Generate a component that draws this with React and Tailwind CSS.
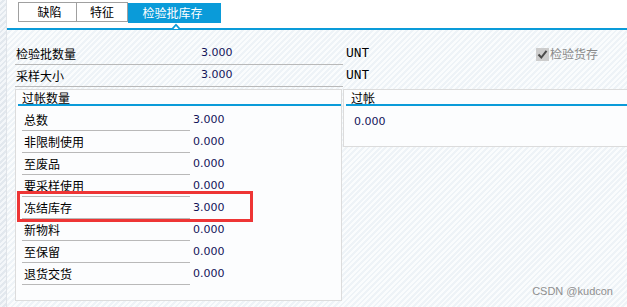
import React from "react";

const cjk = "font-['Noto_Sans_CJK_SC','Noto_Sans',sans-serif]";
const num = "font-['DejaVu_Sans',sans-serif] text-[11px] text-[#14145a]";

function Row({ label, value }) {
  return (
    <div className="flex items-center h-[22px]">
      <div className={`w-[168px] h-[22px] border-b border-[#b9b9b9] pl-[2px] flex items-center text-[12px] text-black ${cjk}`}>
        {label}
      </div>
      <div className={`ml-[3px] ${num}`}>{value}</div>
    </div>
  );
}

export default function App() {
  const rows = [
    ["总数", "3.000"],
    ["非限制使用", "0.000"],
    ["至废品", "0.000"],
    ["要采样使用", "0.000"],
    ["冻结库存", "3.000"],
    ["新物料", "0.000"],
    ["至保留", "0.000"],
    ["退货交货", "0.000"],
  ];
  return (
    <div className="w-[627px] h-[307px] relative overflow-hidden flex bg-white">
      <div className="w-[7px] h-full border-r border-[#dfe3e8] bg-[repeating-linear-gradient(135deg,#f3f6f9_0px,#f3f6f9_2px,#e2e8ee_2px,#e2e8ee_4px)]" />
      <div className="flex-1 flex flex-col">
        <div className="h-[28px] bg-white flex items-start pl-[11px] pt-[2px]">
          <div className={`w-[59px] h-[20px] border border-[#a0a0a0] flex items-center justify-center pl-[4px] text-[12px] text-black ${cjk}`}>
            缺陷
          </div>
          <div className={`w-[51px] h-[20px] border border-l-0 border-[#a0a0a0] flex items-center justify-center text-[12px] text-black ${cjk}`}>
            特征
          </div>
          <div className={`w-[93px] h-[20px] mt-[1px] bg-[#0a9bd9] flex items-center justify-center pr-[4px] text-[12px] text-white ${cjk}`}>
            检验批库存
          </div>
        </div>
        <div className="h-[2px] bg-[#0a9bd9] relative">
          <svg className="absolute left-[164px] top-[-5px]" width="10" height="6" viewBox="0 0 10 6">
            <polygon points="0,6 5,0.5 10,6" fill="#0a9bd9" />
            <polygon points="2.5,6 5,3 7.5,6" fill="#ffffff" />
          </svg>
        </div>
        <div className="flex-1 relative bg-[repeating-linear-gradient(135deg,#fafcfd_0px,#fafcfd_2px,#eef3f7_2px,#eef3f7_4px)] pt-[13px]">
          <div className="flex items-center h-[22px] ml-[8px]">
            <div className={`w-[328px] h-[22px] border-b border-[#b9b9b9] flex items-center text-[12px] text-black ${cjk}`}>
              <span className="w-[186px] pl-[1px]">检验批数量</span>
              <span className={num}>3.000</span>
            </div>
            <span className="ml-[3px] font-['Liberation_Mono',monospace] text-[13px] text-black">UNT</span>
            <div className={`ml-auto mr-[29px] flex items-center text-[12px] text-[#8a8a8a] ${cjk}`}>
              <span className="w-[13px] h-[13px] bg-[#cdcdcd] flex items-center justify-center mr-[1px]">
                <svg width="11" height="11" viewBox="0 0 11 11">
                  <path d="M1.5 5.5 L4.3 8.5 L9.5 1.8" stroke="#4a4a4a" strokeWidth="2" fill="none" />
                </svg>
              </span>
              检验货存
            </div>
          </div>
          <div className="flex items-center h-[22px] ml-[8px]">
            <div className={`w-[328px] h-[22px] border-b border-[#b9b9b9] flex items-center text-[12px] text-black ${cjk}`}>
              <span className="w-[186px] pl-[1px]">采样大小</span>
              <span className={num}>3.000</span>
            </div>
            <span className="ml-[3px] font-['Liberation_Mono',monospace] text-[13px] text-black">UNT</span>
          </div>
          <div className="flex items-start mt-[2px] ml-[8px]">
            <div className="w-[327px] h-[212px] border border-[#dcdcdc] bg-[#fcfdfe] flex flex-col">
              <div className={`ml-[2px] h-[16px] border-b-2 border-[#0a9bd9] pl-[4px] text-[12px] leading-[15px] text-black ${cjk}`}>
                过帐数量
              </div>
              <div className="mt-[3px] ml-[6px] flex flex-col">
                {rows.map(([l, v]) => (
                  <Row key={l} label={l} value={v} />
                ))}
              </div>
            </div>
            <div className="flex-1 ml-[1px] h-[58px] border border-r-0 border-[#dcdcdc] bg-[#fcfdfe] flex flex-col">
              <div className={`ml-[2px] h-[16px] border-b-2 border-[#0a9bd9] pl-[5px] text-[12px] leading-[15px] text-black ${cjk}`}>
                过帐
              </div>
              <div className={`mt-[9px] pl-[10px] leading-[14px] ${num}`}>0.000</div>
            </div>
          </div>
          <div className="absolute left-[10px] top-[161px] w-[236px] h-[31px] border-[3px] border-[#ee3535]" />
          <div className="absolute right-[14px] bottom-[8px] font-['Liberation_Sans',sans-serif] text-[11px] text-[#8f8f8f]">
            CSDN @kudcon
          </div>
        </div>
      </div>
    </div>
  );
}
